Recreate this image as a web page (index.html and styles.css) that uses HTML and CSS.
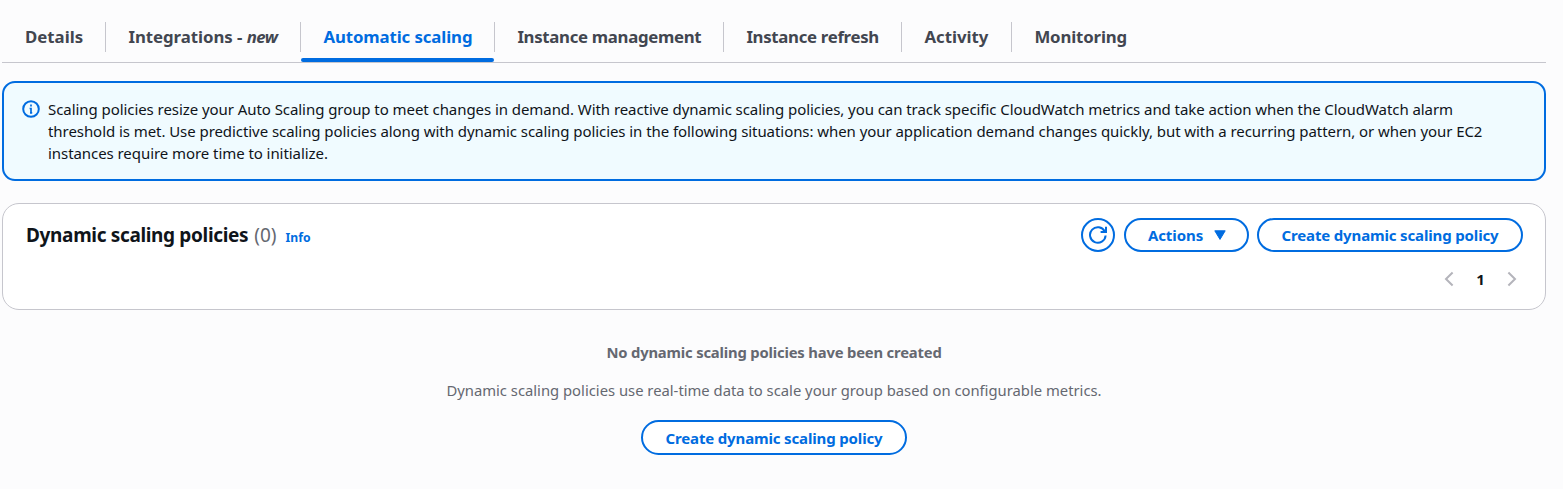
FILE: index.html
```
<!DOCTYPE html>
<html lang="en">
<head>
<meta charset="utf-8">
<title>Automatic scaling</title>
<link rel="stylesheet" href="styles.css">
</head>
<body>
<nav class="tabs">
  <a class="tab tab-details"><span>Details</span></a>
  <a class="tab tab-integrations"><span>Integrations - <em>new</em></span></a>
  <a class="tab tab-scaling active"><span>Automatic scaling</span></a>
  <a class="tab tab-management"><span>Instance management</span></a>
  <a class="tab tab-refresh"><span>Instance refresh</span></a>
  <a class="tab tab-activity"><span>Activity</span></a>
  <a class="tab tab-monitoring"><span>Monitoring</span></a>
</nav>
<section class="alert">
  <svg class="alert-icon" viewBox="0 0 18 18" width="18" height="18" fill="none" stroke="#006ce0" stroke-width="2"><circle cx="9" cy="9" r="7.8"/><path d="M9 4.6v2M7.6 8.5H9V13M8 12.8h2.2" stroke-width="1.7"/></svg>
  <p class="alert-text">Scaling policies resize your Auto Scaling group to meet changes in demand. With reactive dynamic scaling policies, you can track specific CloudWatch metrics and take action when the CloudWatch alarm<br>threshold is met. Use predictive scaling policies along with dynamic scaling policies in the following situations: when your application demand changes quickly, but with a recurring pattern, or when your EC2<br>instances require more time to initialize.</p>
</section>
<section class="panel">
  <header class="panel-header">
    <h2 class="title">Dynamic scaling policies</h2>
    <span class="count">(0)</span>
    <a class="info">Info</a>
    <div class="actions">
      <button class="btn btn-round" aria-label="Refresh"><svg viewBox="0 0 18 18" width="18" height="18" fill="none" stroke="#006ce0" stroke-width="2"><path d="M16.6 9.5A7.8 7.8 0 1 1 15.8 5.5"/><path d="M17 0.8v5.2h-5.4"/></svg></button>
      <button class="btn btn-menu">Actions<svg viewBox="0 0 12 10" width="12" height="10"><path d="M.8 .8h10.4L6 9.4z" fill="#006ce0" stroke="#006ce0" stroke-linejoin="round"/></svg></button>
      <button class="btn btn-create">Create dynamic scaling policy</button>
    </div>
  </header>
  <div class="pager">
    <svg viewBox="0 0 10 16" width="10" height="16"><path d="M8.6 1.5 2 8l6.6 6.5"/></svg>
    <span class="page">1</span>
    <svg viewBox="0 0 10 16" width="10" height="16"><path d="M1.4 1.5 8 8l-6.6 6.5"/></svg>
  </div>
</section>
<section class="empty">
  <strong class="empty-title">No dynamic scaling policies have been created</strong>
  <p class="empty-text">Dynamic scaling policies use real-time data to scale your group based on configurable metrics.</p>
  <button class="btn btn-create btn-tall">Create dynamic scaling policy</button>
</section>
</body>
</html>
```
FILE: styles.css
```
* { box-sizing: border-box; }
body {
  margin: 0;
  padding: 0 17px 0 2px;
  height: 489px;
  overflow: hidden;
  background: #fcfcfd;
  color: #0f141a;
  font-family: "Noto Sans", "Open Sans", sans-serif;
  font-size: 15px;
  line-height: 22px;
}
p, h2 { margin: 0; }
.tabs {
  display: flex;
  height: 63px;
  padding-top: 22px;
  border-bottom: 1px solid #c6c6cd;
}
.tab {
  display: flex;
  flex-direction: column;
  justify-content: space-between;
  color: #424650;
  font-size: 16.8px;
  font-weight: 700;
  white-space: nowrap;
}
.tab span {
  height: 30px;
  line-height: 30px;
  padding-left: 22.4px;
  border-right: 1px solid #c6c6cd;
}
.tab em { letter-spacing: -.6px; }
.tab-details { width: 104px; letter-spacing: 0; }
.tab-details span { padding-left: 23px; }
.tab-integrations { width: 195px; letter-spacing: -.03px; }
.tab-scaling { width: 194px; letter-spacing: -.1px; }
.tab-management { width: 229px; letter-spacing: -.31px; }
.tab-refresh { width: 178px; letter-spacing: -.3px; }
.tab-activity { width: 110px; letter-spacing: 0; }
.tab-monitoring { letter-spacing: -.14px; }
.tab-monitoring span { border: 0; }
.active { color: #006ce0; }
.active::after {
  content: "";
  width: 193px;
  height: 4px;
  border-radius: 2px;
  background: #006ce0;
}
.alert {
  display: flex;
  height: 100px;
  margin-top: 18px;
  padding: 15px 18px;
  border: 2px solid #006ce0;
  border-radius: 13px;
  background: #f0fbff;
}
.alert-icon { flex: none; margin: 2px 8px 0 0; }
.alert-text { letter-spacing: -.063px; white-space: nowrap; }
.panel {
  height: 107px;
  margin-top: 22px;
  padding: 14px 22px 0 23px;
  border: 1px solid #c6c6cd;
  border-radius: 17px;
  background: #fff;
}
.panel-header { display: flex; align-items: baseline; height: 34px; }
.title {
  font-size: 19px;
  font-weight: 700;
  line-height: 34px;
  letter-spacing: -.34px;
}
.count { margin-left: 6px; color: #656871; font-size: 19px; }
.info {
  margin-left: 9px;
  color: #006ce0;
  font-size: 12.2px;
  font-weight: 700;
}
.actions { display: flex; align-self: flex-start; margin-left: auto; }
.btn {
  display: flex;
  align-items: center;
  justify-content: center;
  height: 34px;
  padding: 0;
  border: 2px solid #006ce0;
  border-radius: 18px;
  background: #fff;
  color: #006ce0;
  font: 700 15px/22px "Noto Sans", "Open Sans", sans-serif;
  letter-spacing: -.15px;
  white-space: nowrap;
}
.btn-round { width: 34px; margin-right: 9px; }
.btn-menu { width: 125px; margin-right: 8px; padding-left: 1px; gap: 11px; letter-spacing: -.08px; }
.btn-create { width: 266px; }
.btn-tall { height: 35px; }
.pager {
  display: flex;
  align-items: center;
  justify-content: flex-end;
  height: 22px;
  margin-top: 16px;
  padding-right: 6px;
}
.pager svg { fill: none; stroke: #b4b4bb; stroke-width: 2; }
.page { width: 53px; text-align: center; font-weight: 700; }
.empty {
  display: flex;
  flex-direction: column;
  align-items: center;
  margin-top: 31px;
  color: #656871;
}
.empty-title { font-size: 14.8px; font-weight: 700; letter-spacing: -.18px; }
.empty-text { margin: 16px 0 19px; font-size: 14.8px; }
```
